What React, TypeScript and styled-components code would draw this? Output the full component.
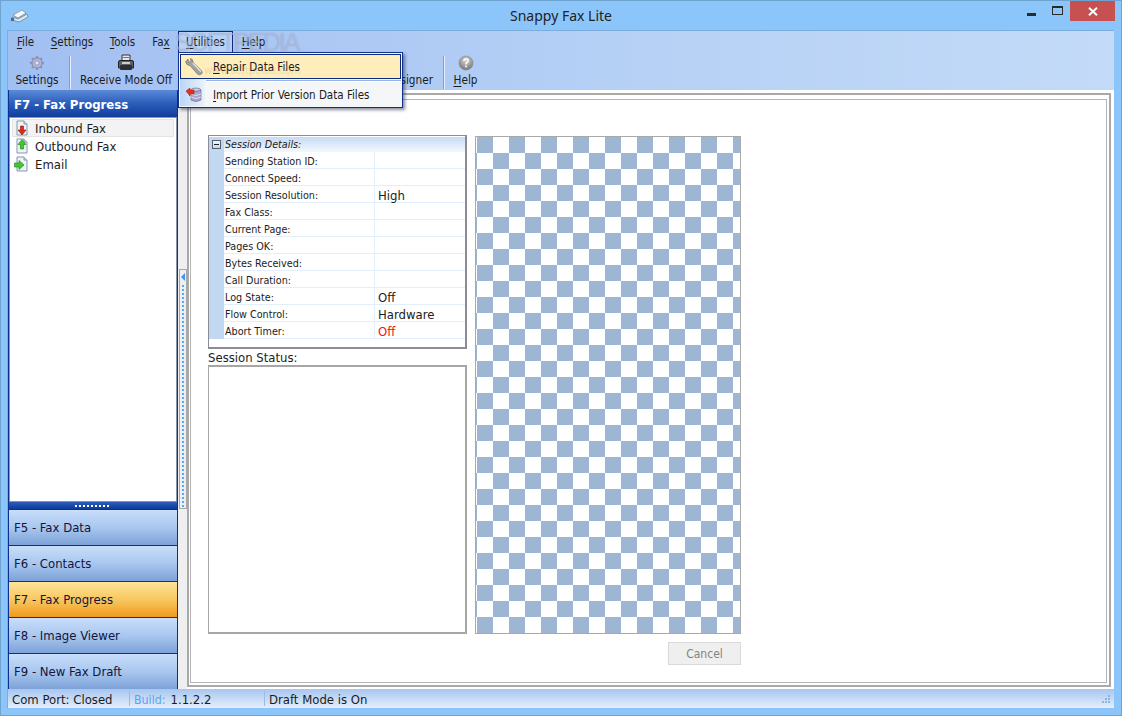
import React from "react";
import styled, { createGlobalStyle } from "styled-components";

const GlobalStyle = createGlobalStyle`
  html, body { margin: 0; padding: 0; }
  body { width: 1122px; height: 716px; overflow: hidden; background: #8cc5fa; }
  * { box-sizing: border-box; }
`;

const UI_FONT = `"DejaVu Sans Condensed", "DejaVu Sans", "Noto Sans", sans-serif`;

const Window = styled.div`
  position: relative;
  width: 1122px;
  height: 716px;
  display: flex;
  flex-direction: column;
  background: #8cc5fa;
  border: 1px solid #6ea3d0;
  font-family: ${UI_FONT};
  font-stretch: condensed;
  font-size: 13px;
  color: #1c1c1c;
  overflow: hidden;
`;

const TitleBar = styled.div`
  position: relative;
  height: 29px;
  flex: none;
  display: flex;
  align-items: flex-start;
  padding-left: 9px;
`;

const AppIcon = styled.div`
  margin-top: 8px;
  height: 14px;
`;

const TitleText = styled.div`
  position: absolute;
  left: 0;
  right: 0;
  top: 5px;
  text-align: center;
  font-family: "Noto Sans", sans-serif;
  font-stretch: normal;
  font-size: 14px;
  line-height: 20px;
  color: #222;
`;

const WinControls = styled.div`
  margin-left: auto;
  margin-right: 6px;
  display: flex;
  height: 20px;
`;

const WinButton = styled.div<{ $w: number; $close?: boolean }>`
  width: ${(p) => p.$w}px;
  height: 20px;
  display: flex;
  align-items: center;
  justify-content: center;
  background: ${(p) => (p.$close ? "#c75050" : "transparent")};
`;

const MinGlyph = styled.svg`
  margin-top: 6px;
`;

const MaxGlyph = styled.svg`
  margin-bottom: 2px;
`;

const Client = styled.div`
  flex: 1;
  min-height: 0;
  margin: 0 7px 7px 6px;
  display: flex;
  flex-direction: column;
  border-top: 1px solid #7aaddb;
  border-left: 1px solid #7aaddb;
`;

const TopBars = styled.div`
  flex: none;
  height: 59px;
  display: flex;
  flex-direction: column;
  background: linear-gradient(90deg, #a2bff2 0%, #b4cff5 50%, #c3dbf8 100%);
`;

const MenuBar = styled.div`
  height: 22px;
  display: flex;
  align-items: center;
  font-size: 11.5px;
`;

const MenuItem = styled.div<{ $open?: boolean; $w: number }>`
  width: ${(p) => p.$w}px;
  height: 22px;
  line-height: 20px;
  text-align: center;
  border: 1px solid ${(p) => (p.$open ? "#0d2a80" : "transparent")};
  border-bottom: ${(p) => (p.$open ? "none" : "1px solid transparent")};
  background: ${(p) => (p.$open ? "#b9d2f6" : "transparent")};
`;

const Mn = styled.span`
  text-decoration: underline;
  text-underline-offset: 2px;
  text-decoration-thickness: 1px;
`;

const Toolbar = styled.div`
  height: 37px;
  display: flex;
  align-items: stretch;
  font-size: 11.7px;
`;

const ToolItem = styled.div<{ $w: number; $end?: boolean; $pr?: number }>`
  width: ${(p) => p.$w}px;
  display: flex;
  flex-direction: column;
  align-items: ${(p) => (p.$end ? "flex-end" : "center")};
  justify-content: flex-end;
  padding-bottom: 2px;
  padding-right: ${(p) => p.$pr ?? 0}px;
  line-height: 16px;
  white-space: nowrap;
`;

const ToolIcon = styled.div`
  height: 20px;
  display: flex;
  align-items: center;
  justify-content: center;
`;

const ToolSep = styled.div`
  width: 2px;
  margin: 3px 0 1px;
  background: #e6f0fc;
  border-left: 1px solid #7f9fce;
`;

const Body = styled.div`
  flex: 1;
  min-height: 0;
  display: flex;
`;

const SidePanel = styled.div`
  width: 170px;
  flex: none;
  display: flex;
  flex-direction: column;
  background: #0d3a9a;
  border-left: 1px solid #0d2f90;
  border-right: 1px solid #0d2f90;
`;

const SideHeader = styled.div`
  height: 27px;
  flex: none;
  padding: 2px 0 0 5px;
  display: flex;
  align-items: center;
  font-weight: 700;
  font-size: 13px;
  color: #fff;
  background: linear-gradient(180deg, #5a8ad8 0%, #2f62bd 45%, #103c9c 100%);
`;

const SideList = styled.div`
  flex: 1;
  min-height: 0;
  background: #fff;
  border: 1px solid #8a94a8;
  padding: 1px 2px;
`;

const SideRow = styled.div<{ $active?: boolean }>`
  height: 18px;
  display: flex;
  align-items: center;
  gap: 5px;
  padding-left: 2px;
  background: ${(p) => (p.$active ? "#f3f3f3" : "transparent")};
  box-shadow: ${(p) => (p.$active ? "inset 0 0 0 1px #e4e4e4" : "none")};
`;

const GripStrip = styled.div`
  height: 7px;
  flex: none;
  display: flex;
  justify-content: center;
  align-items: center;
  background: linear-gradient(180deg, #2c5cb8, #0e3a9a);
`;

const GripDots = styled.div`
  width: 36px;
  height: 2px;
  background: repeating-linear-gradient(90deg, #fff 0 2px, transparent 2px 4px);
`;

const NavButton = styled.div<{ $active?: boolean }>`
  height: 36px;
  flex: none;
  display: flex;
  align-items: center;
  padding-left: 5px;
  color: #14143c;
  border-top: 1px solid #0d2f90;
  background: ${(p) =>
    p.$active
      ? "linear-gradient(180deg, #fde498 0%, #f8c760 50%, #f09a1e 100%)"
      : "linear-gradient(180deg, #c8defb 0%, #a9c7ef 50%, #7da2d8 100%)"};
`;

const Splitter = styled.div`
  width: 9px;
  flex: none;
  background: #efefef;
  display: flex;
  flex-direction: column;
  align-items: center;
`;

const SplitGrip = styled.div`
  margin-top: 179px;
  width: 8px;
  height: 240px;
  border: 1px solid #a8a8a8;
  display: flex;
  flex-direction: column;
  align-items: center;
  padding-top: 3px;
`;

const SplitArrow = styled.div`
  width: 0;
  height: 0;
  border-top: 4px solid transparent;
  border-bottom: 4px solid transparent;
  border-right: 4px solid #3d94f0;
`;

const SplitDots = styled.div`
  width: 2px;
  margin-top: 4px;
  flex: 1;
  background: repeating-linear-gradient(180deg, #5aa8f5 0 2px, transparent 2px 4px);
`;

const Content = styled.div`
  flex: 1;
  min-width: 0;
  background: #fff;
  padding: 3px 3px 2px 0;
  display: flex;
`;

const OuterFrame = styled.div`
  flex: 1;
  border: 2px solid #a9a9a9;
  padding: 4px 2px 2px 1px;
  display: flex;
`;

const InnerFrame = styled.div`
  flex: 1;
  border: 1px solid #b4b4b4;
  padding: 35px 0 0 17px;
  display: flex;
  gap: 8px;
`;

const LeftColumn = styled.div`
  width: 259px;
  flex: none;
  display: flex;
  flex-direction: column;
`;

const PropGrid = styled.div`
  height: 214px;
  flex: none;
  border: 1px solid #8c8c96;
  border-right-width: 2px;
  border-bottom-width: 2px;
  background: #fff;
  padding-top: 1px;
  display: flex;
  flex-direction: column;
`;

const PropHeader = styled.div`
  height: 15px;
  flex: none;
  display: flex;
  align-items: center;
  font-style: italic;
  font-size: 10.7px;
  color: #222;
  background: linear-gradient(180deg, #c6dbf4 0%, #f4f8fd 100%);
`;

const Expander = styled.div`
  width: 15px;
  flex: none;
  margin-right: 1px;
  display: flex;
  align-items: center;
  justify-content: center;
  background: #c2d8f0;
  height: 15px;
`;

const ExpanderBox = styled.div`
  width: 9px;
  height: 9px;
  border: 1px solid #55606e;
  background: linear-gradient(180deg, #f4f8fc, #c8d8ea);
  display: flex;
  align-items: center;
  justify-content: center;
  &::after {
    content: "";
    width: 5px;
    height: 1px;
    background: #222;
  }
`;

const PropRow = styled.div`
  height: 17px;
  flex: none;
  display: flex;
`;

const PropGutter = styled.div`
  width: 15px;
  flex: none;
  background: #c2d8f0;
`;

const PropLabel = styled.div`
  width: 151px;
  flex: none;
  padding-left: 1px;
  font-size: 10.7px;
  line-height: 19px;
  border-bottom: 1px solid #e3eefc;
  border-right: 1px solid #e3eefc;
  white-space: nowrap;
`;

const PropValue = styled.div<{ $alert?: boolean }>`
  flex: 1;
  padding-left: 3px;
  line-height: 19px;
  color: ${(p) => (p.$alert ? "#f01010" : "#1c1c1c")};
  border-bottom: 1px solid #e3eefc;
`;

const StatusLabel = styled.div`
  height: 16px;
  flex: none;
  line-height: 17px;
`;

const StatusBox = styled.div`
  height: 269px;
  flex: none;
  border: 1px solid #a6a6a6;
  border-right-width: 2px;
  border-bottom-width: 2px;
  border-top-width: 2px;
`;

const RightColumn = styled.div`
  width: 266px;
  flex: none;
  display: flex;
  flex-direction: column;
  align-items: flex-end;
`;

const Preview = styled.div`
  width: 266px;
  height: 498px;
  margin-top: 1px;
  border: 1px solid #a9a9a9;
  background: conic-gradient(#fff 25%, #9cb6d4 0 50%, #fff 0 75%, #9cb6d4 0) 1px 0 / 32px 32px;
`;

const CancelButton = styled.div`
  width: 73px;
  height: 23px;
  margin-top: 8px;
  display: flex;
  align-items: center;
  justify-content: center;
  font-size: 12px;
  background: #efefef;
  border: 1px solid #d9d9d9;
  color: #838383;
`;

const StatusBar = styled.div`
  height: 19px;
  flex: none;
  display: flex;
  align-items: center;
  position: relative;
  background: linear-gradient(180deg, #a8c6f0 0%, #e4eefb 100%);
`;

const StatusCell = styled.div<{ $w: number; $last?: boolean }>`
  width: ${(p) => p.$w}px;
  height: 15px;
  line-height: 17px;
  padding-left: 4px;
  border-right: ${(p) => (p.$last ? "none" : "1px solid #9cbbe4")};
  white-space: nowrap;
`;

const BuildLabel = styled.span`
  color: #5ba3f2;
  font-size: 12.3px;
  margin-right: 5px;
`;

const ResizeGrip = styled.div`
  position: absolute;
  right: 3px;
  bottom: 3px;
  width: 11px;
  height: 11px;
`;

const Popup = styled.div`
  position: absolute;
  left: 177px;
  top: 51px;
  width: 225px;
  height: 56px;
  border: 1px solid #12308a;
  background: #f5f6f7;
  box-shadow: 2px 2px 3px rgba(40, 50, 80, 0.55);
  z-index: 5;
  display: flex;
  flex-direction: column;
  padding: 1px;
  font-size: 11.5px;
`;

const PopupStrip = styled.div`
  position: absolute;
  left: 1px;
  top: 1px;
  bottom: 1px;
  width: 25px;
  background: linear-gradient(90deg, #bcd6f6, #eaf2fc);
`;

const PopupItem = styled.div<{ $hot?: boolean }>`
  position: relative;
  height: ${(p) => (p.$hot ? 25 : 26)}px;
  flex: none;
  display: flex;
  align-items: center;
  border: 1px solid ${(p) => (p.$hot ? "#0c2a7e" : "transparent")};
  background: ${(p) => (p.$hot ? "#ffedbc" : "transparent")};
`;

const PopupIcon = styled.div`
  width: 32px;
  flex: none;
  display: flex;
  align-items: center;
  justify-content: center;
  padding-right: 6px;
`;

const PopupSep = styled.div`
  position: relative;
  height: 2px;
  flex: none;
  margin: 1px 0 0 26px;
  background: #97b4de;
  border-bottom: 1px solid #fff;
`;

const Watermark = styled.div`
  position: absolute;
  left: 174px;
  top: 27px;
  font-family: "Liberation Sans", sans-serif;
  font-stretch: normal;
  font-size: 25px;
  letter-spacing: -2px;
  color: rgba(255, 255, 255, 0.32);
  text-shadow: 0 0 1px rgba(70, 90, 150, 0.45);
  z-index: 6;
  pointer-events: none;
  white-space: nowrap;
`;

const WatermarkUrl = styled.div`
  position: absolute;
  left: 203px;
  top: 63px;
  font-size: 11px;
  color: rgba(120, 110, 90, 0.18);
  z-index: 6;
  pointer-events: none;
`;

function FaxIcon() {
  return (
    <svg width="20" height="14" viewBox="0 0 20 14">
      <path d="M3 6 L12 1 L16 4 L8 9 Z" fill="#f4f8fc" stroke="#7d8ea4" strokeWidth="0.8" />
      <path d="M2 8 L8 10 L17 5 L18 8 L9 13 L2 11 Z" fill="#dfe8f2" stroke="#6f8198" strokeWidth="0.8" />
      <rect x="1" y="9" width="3" height="3" fill="#54677e" />
    </svg>
  );
}

function GearIcon() {
  return (
    <svg width="16" height="16" viewBox="0 0 16 16">
      <g stroke="#8f97bb" strokeWidth="2.4">
        <path d="M8 1 V15 M1 8 H15 M3 3 L13 13 M13 3 L3 13" />
      </g>
      <circle cx="8" cy="8" r="5" fill="#b4bad6" stroke="#8089ad" />
      <circle cx="8" cy="8" r="2.2" fill="#dfe6f6" stroke="#8089ad" strokeWidth="0.8" />
    </svg>
  );
}

function PrinterIcon() {
  return (
    <svg width="18" height="18" viewBox="0 0 18 18">
      <path d="M5 1 H13 V8 H5 Z" fill="#e8e8e8" stroke="#333" />
      <path d="M1.5 8 Q1.5 6.5 3 6.5 H15 Q16.5 6.5 16.5 8 V14 H1.5 Z" fill="#5c6066" stroke="#222" />
      <rect x="3" y="11" width="12" height="5" rx="1" fill="#2b2d31" />
      <rect x="6" y="3" width="6" height="1" fill="#777" />
      <rect x="5" y="8" width="8" height="2" fill="#c9ccd0" />
    </svg>
  );
}

function HelpIcon() {
  return (
    <svg width="16" height="16" viewBox="0 0 16 16">
      <defs>
        <radialGradient id="helpBall" cx="50%" cy="30%" r="75%">
          <stop offset="0" stopColor="#d8d8d8" />
          <stop offset="1" stopColor="#6e6e6e" />
        </radialGradient>
      </defs>
      <circle cx="8" cy="8" r="7" fill="url(#helpBall)" stroke="#8a8a8a" strokeWidth="0.7" />
      <path d="M5.8 6 Q6 4 8 4 Q10.4 4 10.2 6 Q10 7.2 8.6 7.8 Q8 8.2 8 9.4" fill="none" stroke="#fff" strokeWidth="1.5" />
      <rect x="7.2" y="10.6" width="1.7" height="1.7" fill="#fff" />
    </svg>
  );
}

function DocIcon({ kind }: { kind: "in" | "out" | "mail" }) {
  return (
    <svg width="16" height="16" viewBox="0 0 16 16">
      <path d="M3 1 H10 L13 4 V15 H3 Z" fill="#eef3f8" stroke="#8299b3" />
      <path d="M10 1 V4 H13" fill="#d3dfeb" stroke="#8299b3" />
      {kind === "in" && <path d="M6.5 6 H9.5 V10 H12 L8 15 L4 10 H6.5 Z" fill="#e02a18" stroke="#8e1a10" strokeWidth="0.6" />}
      {kind === "out" && <path d="M8 1.5 L12 6.5 H9.6 V11 H6.4 V6.5 H4 Z" fill="#3fcb2c" stroke="#1e7c16" strokeWidth="0.6" />}
      {kind === "mail" && <path d="M0.5 7 H5 V4.5 L10 9 L5 13.5 V11 H0.5 Z" fill="#3fcb2c" stroke="#1e7c16" strokeWidth="0.6" />}
    </svg>
  );
}

function WrenchIcon() {
  return (
    <svg width="20" height="20" viewBox="0 0 20 20">
      <path d="M1.5 5 L4 2 L4.5 5.5 L7 4 L6.5 1.5 Q9 2 9 5 L17.5 13.5 Q19 15.5 17.5 17 Q15.5 18.5 13.5 17 L6 8.5 Q3 8.8 1.5 5 Z" fill="#a2a2a0" stroke="#77787a" strokeWidth="0.8" />
      <path d="M9 6 L17 14.5" stroke="#e6e6e2" strokeWidth="1.4" />
    </svg>
  );
}

function ImportIcon() {
  return (
    <svg width="18" height="18" viewBox="0 0 18 18">
      <ellipse cx="11" cy="4" rx="5" ry="2" fill="#c8c8e0" stroke="#6e6e96" strokeWidth="0.7" />
      <path d="M6 4 V14 Q11 17 16 14 V4 Q11 7 6 4 Z" fill="#a8a6cc" stroke="#6e6e96" strokeWidth="0.7" />
      <path d="M6 8 Q11 11 16 8 M6 11 Q11 14 16 11" fill="none" stroke="#e8e8f4" strokeWidth="0.8" />
      <path d="M1 5 L5 2 V4 H9 V8 H5 V10 Z" fill="#e8301c" stroke="#a0180c" strokeWidth="0.5" />
    </svg>
  );
}

const gridRows: { label: string; value?: string; alert?: boolean }[] = [
  { label: "Sending Station ID:" },
  { label: "Connect Speed:" },
  { label: "Session Resolution:", value: "High" },
  { label: "Fax Class:" },
  { label: "Current Page:" },
  { label: "Pages OK:" },
  { label: "Bytes Received:" },
  { label: "Call Duration:" },
  { label: "Log State:", value: "Off" },
  { label: "Flow Control:", value: "Hardware" },
  { label: "Abort Timer:", value: "Off", alert: true },
];

const navButtons = ["F5 - Fax Data", "F6 - Contacts", "F7 - Fax Progress", "F8 - Image Viewer", "F9 - New Fax Draft"];

export default function App() {
  return (
    <>
      <GlobalStyle />
      <Window>
        <TitleBar>
          <AppIcon>
            <FaxIcon />
          </AppIcon>
          <TitleText>Snappy Fax Lite</TitleText>
          <WinControls>
            <WinButton $w={26}>
              <MinGlyph width="9" height="3" viewBox="0 0 9 3">
                <rect width="9" height="3" fill="#2a2a2a" />
              </MinGlyph>
            </WinButton>
            <WinButton $w={26}>
              <MaxGlyph width="11" height="9" viewBox="0 0 11 9">
                <rect x="0.5" y="0.5" width="10" height="8" fill="none" stroke="#2a2a2a" />
                <rect x="0" y="0" width="11" height="2" fill="#2a2a2a" />
              </MaxGlyph>
            </WinButton>
            <WinButton $w={45} $close>
              <svg width="10" height="9" viewBox="0 0 10 9">
                <path d="M1 0.8 L9 8.2 M9 0.8 L1 8.2" stroke="#fff" strokeWidth="2" />
              </svg>
            </WinButton>
          </WinControls>
        </TitleBar>
        <Client>
          <TopBars>
            <MenuBar>
              <MenuItem $w={35}><Mn>F</Mn>ile</MenuItem>
              <MenuItem $w={58}><Mn>S</Mn>ettings</MenuItem>
              <MenuItem $w={43}><Mn>T</Mn>ools</MenuItem>
              <MenuItem $w={34}>Fa<Mn>x</Mn></MenuItem>
              <MenuItem $w={55} $open><Mn>U</Mn>tilities</MenuItem>
              <MenuItem $w={41}><Mn>H</Mn>elp</MenuItem>
            </MenuBar>
            <Toolbar>
              <ToolItem $w={61} $pr={3}>
                <ToolIcon><GearIcon /></ToolIcon>
                Settings
              </ToolItem>
              <ToolSep />
              <ToolItem $w={110}>
                <ToolIcon><PrinterIcon /></ToolIcon>
                Receive Mode Off
              </ToolItem>
              <ToolItem $w={262} $end $pr={10}>
                <ToolIcon />
                Cover Page Designer
              </ToolItem>
              <ToolSep />
              <ToolItem $w={41}>
                <ToolIcon><HelpIcon /></ToolIcon>
                <span><Mn>H</Mn>elp</span>
              </ToolItem>
            </Toolbar>
          </TopBars>
          <Body>
            <SidePanel>
              <SideHeader>F7 - Fax Progress</SideHeader>
              <SideList>
                <SideRow $active><DocIcon kind="in" />Inbound Fax</SideRow>
                <SideRow><DocIcon kind="out" />Outbound Fax</SideRow>
                <SideRow><DocIcon kind="mail" />Email</SideRow>
              </SideList>
              <GripStrip><GripDots /></GripStrip>
              {navButtons.map((label) => (
                <NavButton key={label} $active={label.startsWith("F7")}>{label}</NavButton>
              ))}
            </SidePanel>
            <Splitter>
              <SplitGrip>
                <SplitArrow />
                <SplitDots />
              </SplitGrip>
            </Splitter>
            <Content>
              <OuterFrame>
                <InnerFrame>
                  <LeftColumn>
                    <PropGrid>
                      <PropHeader>
                        <Expander><ExpanderBox /></Expander>
                        Session Details:
                      </PropHeader>
                      {gridRows.map((row) => (
                        <PropRow key={row.label}>
                          <PropGutter />
                          <PropLabel>{row.label}</PropLabel>
                          <PropValue $alert={row.alert}>{row.value}</PropValue>
                        </PropRow>
                      ))}
                    </PropGrid>
                    <StatusLabel>Session Status:</StatusLabel>
                    <StatusBox />
                  </LeftColumn>
                  <RightColumn>
                    <Preview />
                    <CancelButton>Cancel</CancelButton>
                  </RightColumn>
                </InnerFrame>
              </OuterFrame>
            </Content>
          </Body>
          <StatusBar>
            <StatusCell $w={122}>Com Port: Closed</StatusCell>
            <StatusCell $w={135}><BuildLabel>Build:</BuildLabel>1.1.2.2</StatusCell>
            <StatusCell $w={200} $last>Draft Mode is On</StatusCell>
            <ResizeGrip>
              <svg width="11" height="11" viewBox="0 0 11 11" fill="#8db2e6">
                <rect x="8" y="0" width="2" height="2" />
                <rect x="5" y="3" width="2" height="2" />
                <rect x="8" y="3" width="2" height="2" />
                <rect x="2" y="6" width="2" height="2" />
                <rect x="5" y="6" width="2" height="2" />
                <rect x="8" y="6" width="2" height="2" />
              </svg>
            </ResizeGrip>
          </StatusBar>
        </Client>
        <Popup>
          <PopupStrip />
          <PopupItem $hot>
            <PopupIcon><WrenchIcon /></PopupIcon>
            <span><Mn>R</Mn>epair Data Files</span>
          </PopupItem>
          <PopupSep />
          <PopupItem>
            <PopupIcon><ImportIcon /></PopupIcon>
            <span><Mn>I</Mn>mport Prior Version Data Files</span>
          </PopupItem>
        </Popup>
        <Watermark>SOFTPEDIA</Watermark>
        <WatermarkUrl>www.softpedia.com</WatermarkUrl>
      </Window>
    </>
  );
}
